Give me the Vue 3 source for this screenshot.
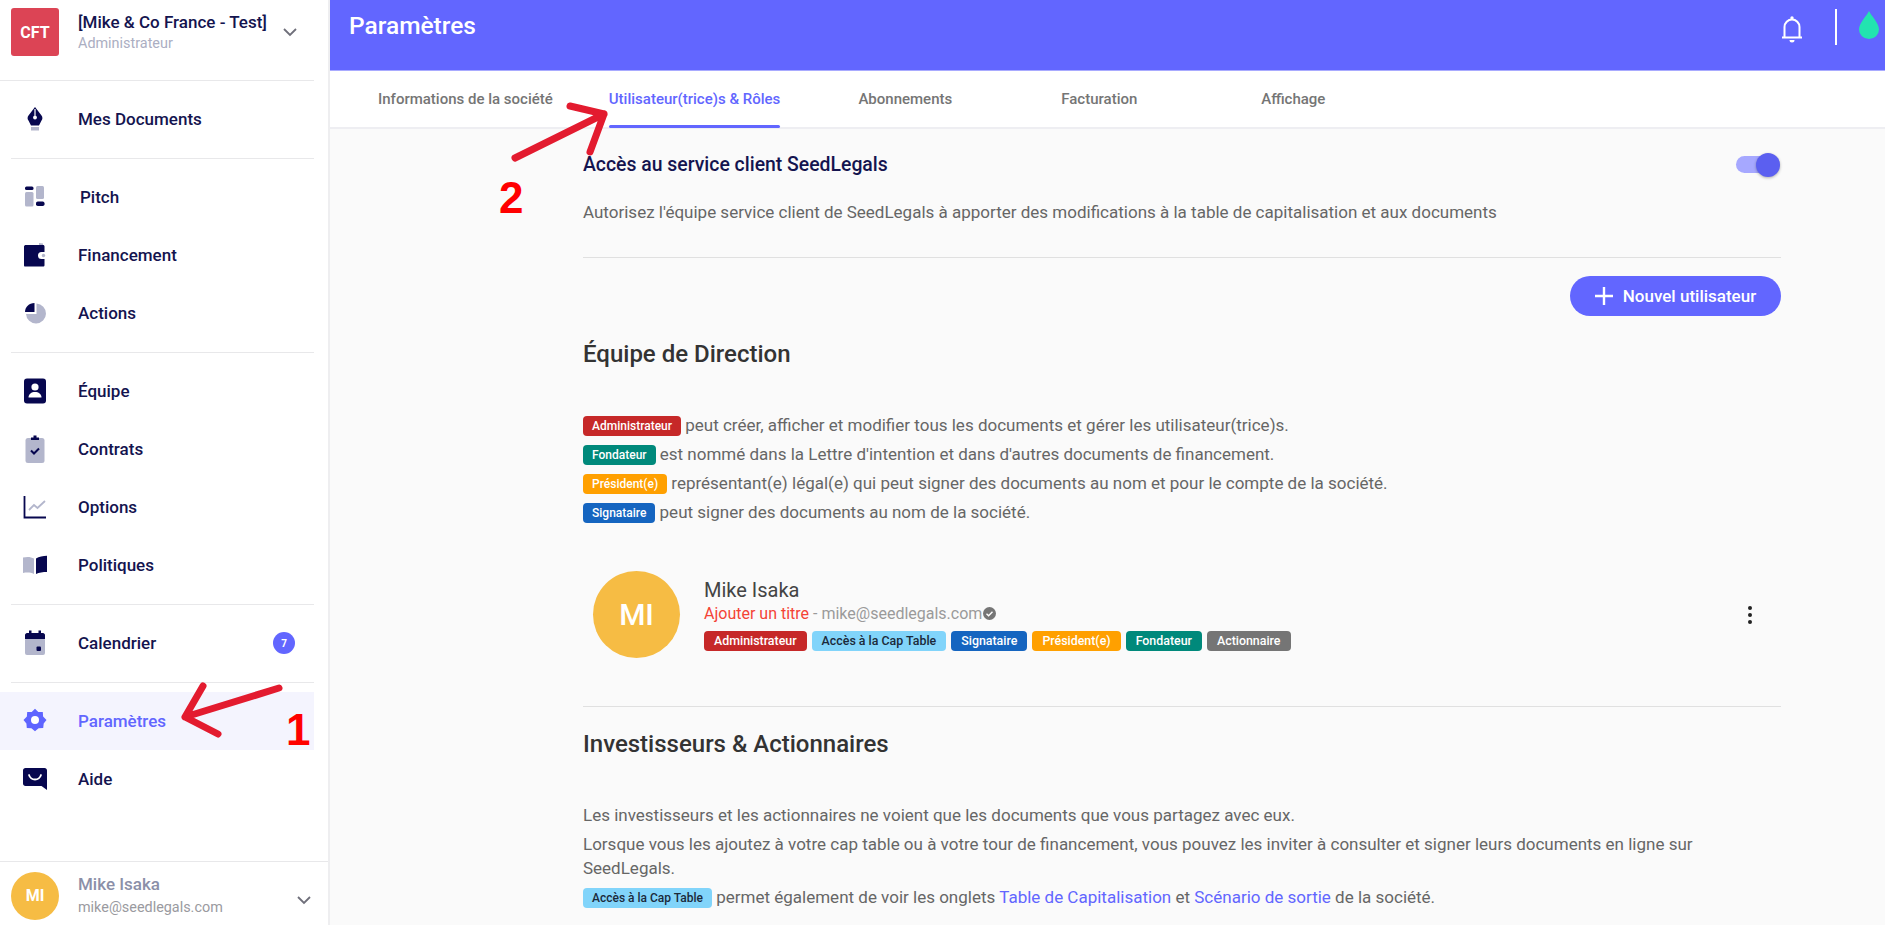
<script setup>
const tabs = ['Informations de la société', 'Utilisateur(trice)s & Rôles', 'Abonnements', 'Facturation', 'Affichage']
const userTags = [
  { label: 'Administrateur', cls: 'red' },
  { label: 'Accès à la Cap Table', cls: 'sky' },
  { label: 'Signataire', cls: 'blue' },
  { label: 'Président(e)', cls: 'orange' },
  { label: 'Fondateur', cls: 'teal' },
  { label: 'Actionnaire', cls: 'grey' }
]
</script>

<template>
  <div class="shell">
    <aside class="sidebar">
      <div class="company">
        <div class="logo">CFT</div>
        <div class="company_text">
          <div class="company_name">[Mike &amp; Co France - Test]</div>
          <div class="company_role">Administrateur</div>
        </div>
        <svg class="chev" width="16" height="10" viewBox="0 0 16 10"><path d="M2 2l6 6 6-6" fill="none" stroke="#6f6f7a" stroke-width="1.8"/></svg>
      </div>

      <div class="nav_group">
        <div class="nav_item">
          <span class="nav_icon">
            <svg width="18" height="24" viewBox="0 0 18 24"><path d="M9 0l6.500 8.500c1.300 1.800 1.200 3.500-.1 5.200L13 18.500H5l-2.400-4.800C1.300 12 1.200 10.300 2.500 8.500z" fill="#07074f"/><path d="M8.400 2h1.200v6.800H8.400z" fill="#fff"/><circle cx="9" cy="10.500" r="1.900" fill="#fff"/><rect x="5" y="20" width="8" height="3.500" fill="#b3b6cc"/></svg>
          </span>
          Mes Documents
        </div>
      </div>

      <div class="nav_group">
        <div class="nav_item pitch">
          <span class="nav_icon">
            <svg width="24" height="24" viewBox="0 0 24 24"><rect x="2" y="1.500" width="8.500" height="3.500" rx="1.500" fill="#07074f"/><rect x="2" y="7" width="8.500" height="14.500" rx="1.500" fill="#b3b6cc"/><rect x="13" y="1" width="8" height="13" rx="1.500" fill="#b3b6cc"/><rect x="13" y="16.500" width="8.500" height="4.500" rx="1.800" fill="#07074f"/></svg>
          </span>
          Pitch
        </div>
        <div class="nav_item">
          <span class="nav_icon">
            <svg width="26" height="26" viewBox="0 0 26 26"><path d="M17 1l4 .5V4h-4z" fill="#b3b6cc"/><path d="M2 4.500C2 3.500 3 3 4 3h17c1 0 1.500.6 1.500 1.500V10h-3a3.500 3.500 0 000 7h3v6c0 1-.5 1.500-1.500 1.500H3c-.6 0-1-.5-1-1.500z" fill="#07074f"/><circle cx="21.500" cy="13.500" r="1.700" fill="#b3b6cc"/></svg>
          </span>
          Financement
        </div>
        <div class="nav_item">
          <span class="nav_icon">
            <svg width="24" height="24" viewBox="0 0 24 24"><path d="M13.500 2.500A10 10 0 113 13h10.500z" fill="#b3b6cc"/><path d="M11.500 2v9H2C2 6 6 2 11.500 2z" fill="#07074f"/></svg>
          </span>
          Actions
        </div>
      </div>

      <div class="nav_group">
        <div class="nav_item">
          <span class="nav_icon">
            <svg width="24" height="26" viewBox="0 0 24 26"><rect x="1" y="0.500" width="22" height="25" rx="3" fill="#07074f"/><circle cx="12" cy="9" r="3.600" fill="#fff"/><path d="M5.500 19.500c0-3.500 3-5.500 6.500-5.500s6.500 2 6.500 5.500z" fill="#fff"/></svg>
          </span>
          Équipe
        </div>
        <div class="nav_item">
          <span class="nav_icon">
            <svg width="24" height="28" viewBox="0 0 24 28"><rect x="2.500" y="3" width="19" height="25" rx="2.500" fill="#b3b6cc"/><rect x="8" y="2.500" width="8" height="2.500" fill="#07074f"/><rect x="10.500" y="0.500" width="3" height="2.500" fill="#07074f"/><path d="M8 15.500l3 3 5-5" fill="none" stroke="#07074f" stroke-width="2"/></svg>
          </span>
          Contrats
        </div>
        <div class="nav_item">
          <span class="nav_icon">
            <svg width="24" height="24" viewBox="0 0 24 24"><path d="M1.500 1v21.500H23" fill="none" stroke="#07074f" stroke-width="1.800"/><path d="M6 15l5-5 3.500 3L22 6" fill="none" stroke="#b3b6cc" stroke-width="1.800"/></svg>
          </span>
          Options
        </div>
        <div class="nav_item">
          <span class="nav_icon">
            <svg width="26" height="20" viewBox="0 0 26 20"><path d="M1 2.500c4-1 8-.8 11 1V19c-3-1.500-7-1.700-11-1z" fill="#b3b6cc"/><path d="M14 3.500c3-1.800 7-2.800 11-2.800V17c-4 0-8 .6-11 2z" fill="#07074f"/></svg>
          </span>
          Politiques
        </div>
      </div>

      <div class="nav_group">
        <div class="nav_item">
          <span class="nav_icon">
            <svg width="22" height="26" viewBox="0 0 22 26"><rect x="1" y="8" width="20" height="17" rx="2" fill="#b3b6cc"/><path d="M1 9V5c0-1 1-2 2-2h16c1 0 2 1 2 2v4z" fill="#07074f"/><rect x="5" y="0.500" width="2.500" height="4" fill="#07074f"/><rect x="14.500" y="0.500" width="2.500" height="4" fill="#07074f"/><rect x="12.500" y="16.500" width="4.500" height="4.500" rx="1" fill="#07074f"/></svg>
          </span>
          Calendrier
          <span class="count">7</span>
        </div>
      </div>

      <div class="nav_group last">
        <div class="nav_item active">
          <span class="nav_icon">
            <svg width="24" height="26" viewBox="0 0 24 26"><path d="M12 .8l3.300 3.300 4.500-.2.300 4.600L23.500 12l-2.800 3.600-.5 4.500-4.600.1L12 23.200l-3.600-3-4.600-.1-.4-4.500L.5 12l3.400-3.500.3-4.600 4.500.2z" fill="#5e64ff"/><circle cx="12" cy="12" r="4" fill="#fff"/></svg>
          </span>
          Paramètres
        </div>
        <div class="nav_item">
          <span class="nav_icon">
            <svg width="26" height="24" viewBox="0 0 26 24"><path d="M3.500 1h19C24 1 25 2 25 3.500V23l-5.500-4h-16C2 19 1 18 1 16.500v-13C1 2 2 1 3.500 1z" fill="#07074f"/><path d="M7 8c1 3 3.500 4.500 6 4.500S18 11 19 8" fill="none" stroke="#fff" stroke-width="1.800" stroke-linecap="round"/></svg>
          </span>
          Aide
        </div>
      </div>

      <div class="account">
        <div class="account_avatar">MI</div>
        <div class="account_text">
          <div class="account_name">Mike Isaka</div>
          <div class="account_mail">mike@seedlegals.com</div>
        </div>
        <svg class="chev" width="16" height="10" viewBox="0 0 16 10"><path d="M2 2l6 6 6-6" fill="none" stroke="#6f6f7a" stroke-width="1.800"/></svg>
      </div>
    </aside>

    <main class="page">
      <header class="topbar">
        <h1>Paramètres</h1>
        <div class="topbar_right">
          <svg class="bell" width="24" height="28" viewBox="0 0 24 28"><path d="M2 22.500h20M4.500 22V12a7.500 7.500 0 0115 0v10" fill="none" stroke="#fff" stroke-width="2"/><circle cx="12" cy="3" r="1.700" fill="#fff"/><path d="M9.500 25h5a2.500 2.500 0 01-5 0z" fill="#fff"/></svg>
          <span class="bar"></span>
          <svg class="drop" width="20" height="28" viewBox="0 0 20 28"><path d="M10 0c2 4.500 10 12 10 18.500A10 9.500 0 010 18.500C0 12 8 4.500 10 0z" fill="#22e4b0"/></svg>
        </div>
      </header>

      <nav class="tabs">
        <div v-for="(tab, i) in tabs" :key="tab" class="tab" :class="{ current: i === 1 }">
          <span>{{ tab }}</span>
        </div>
      </nav>

      <section class="content">
        <div class="access_row">
          <h3>Accès au service client SeedLegals</h3>
          <div class="toggle"><span class="thumb"></span></div>
        </div>
        <p class="access_desc">Autorisez l'équipe service client de SeedLegals à apporter des modifications à la table de capitalisation et aux documents</p>
        <hr />

        <div class="btn_row">
          <button class="add_btn">
            <svg width="18" height="18" viewBox="0 0 18 18"><path d="M9 0v18M0 9h18" stroke="#fff" stroke-width="2.400"/></svg>
            Nouvel utilisateur
          </button>
        </div>

        <h2 class="team_title">Équipe de Direction</h2>
        <div class="legend">
          <p><span class="tag red">Administrateur</span> peut créer, afficher et modifier tous les documents et gérer les utilisateur(trice)s.</p>
          <p><span class="tag teal">Fondateur</span> est nommé dans la Lettre d'intention et dans d'autres documents de financement.</p>
          <p><span class="tag orange">Président(e)</span> représentant(e) légal(e) qui peut signer des documents au nom et pour le compte de la société.</p>
          <p><span class="tag blue">Signataire</span> peut signer des documents au nom de la société.</p>
        </div>

        <div class="user_row">
          <div class="user_avatar">MI</div>
          <div class="user_info">
            <div class="user_name">Mike Isaka</div>
            <div class="user_line">
              <span class="add_title">Ajouter un titre</span> - mike@seedlegals.com<svg class="verified" width="13" height="13" viewBox="0 0 13 13"><circle cx="6.500" cy="6.500" r="6.500" fill="#757575"/><path d="M3.500 6.700l2.100 2.100 3.900-4" fill="none" stroke="#fff" stroke-width="1.400"/></svg>
            </div>
            <div class="user_tags">
              <span v-for="tag in userTags" :key="tag.label" class="tag" :class="tag.cls">{{ tag.label }}</span>
            </div>
          </div>
          <svg class="more" width="6" height="20" viewBox="0 0 6 20"><circle cx="3" cy="3" r="2" fill="#222"/><circle cx="3" cy="10" r="2" fill="#222"/><circle cx="3" cy="17" r="2" fill="#222"/></svg>
        </div>
        <hr />

        <h2 class="investor_title">Investisseurs &amp; Actionnaires</h2>
        <div class="legend investors">
          <p>Les investisseurs et les actionnaires ne voient que les documents que vous partagez avec eux.</p>
          <p>Lorsque vous les ajoutez à votre cap table ou à votre tour de financement, vous pouvez les inviter à consulter et signer leurs documents en ligne sur SeedLegals.</p>
          <p><span class="tag sky">Accès à la Cap Table</span> permet également de voir les onglets <a>Table de Capitalisation</a> et <a>Scénario de sortie</a> de la société.</p>
        </div>
      </section>
    </main>

    <!-- annotations drawn over the screenshot -->
    <svg class="arrows" width="1885" height="925" viewBox="0 0 1885 925">
      <g fill="none" stroke="#e31b2f" stroke-width="7" stroke-linecap="round" stroke-linejoin="round">
        <path d="M279 688L185 717M203 686L185 717L218 734"/>
        <path d="M515 158L604 114M570 106L604 114L590 152"/>
      </g>
    </svg>
    <span class="mark one">1</span>
    <span class="mark two">2</span>
  </div>
</template>

<style scoped>
.shell {
  position: relative;
  display: flex;
  width: 100%;
  height: 925px;
  overflow: hidden;
  font-family: Roboto, "Liberation Sans", sans-serif;
}

.sidebar {
  display: flex;
  flex-direction: column;
  flex: none;
  width: 328px;
  border-right: 2px solid #eeeef0;
  background: #fff;
  color: #14144f;
}
.company {
  display: flex;
  flex: none;
  align-items: center;
  width: 314px;
  height: 81px;
  box-sizing: border-box;
  padding-left: 11px;
  border-bottom: 1px solid #e8e8ea;
}
.logo {
  display: flex;
  flex: none;
  width: 48px;
  height: 48px;
  margin-top: -16px;
  border-radius: 3px;
  background: #dc4455;
  color: #fff;
  font-size: 16px;
  font-weight: 700;
  align-items: center;
  justify-content: center;
}
.company_text {
  margin-left: 19px;
  margin-top: -16px;
}
.company_name {
  font-size: 17px;
  font-weight: 500;
  line-height: 22px;
}
.company_role {
  margin-top: 1px;
  color: #abaec2;
  font-size: 14.4px;
  line-height: 20px;
}
.chev {
  margin-left: auto;
  margin-right: 16px;
  margin-top: -16px;
  flex: none;
}

.nav_group {
  width: 314px;
  padding: 9px 0 11px;
  position: relative;
}
.nav_group::after {
  content: "";
  position: absolute;
  left: 11px;
  right: 0;
  bottom: 0;
  height: 1px;
  background: #e8e8ea;
}
.nav_group.last::after {
  display: none;
}
.nav_item {
  display: flex;
  align-items: center;
  height: 58px;
  font-size: 17px;
  font-weight: 500;
}
.nav_item.pitch {
  padding-left: 2px;
}
.nav_item.pitch .nav_icon {
  margin-left: -2px;
  width: 80px;
  padding-right: 10px;
}
.nav_item.active {
  background: #f4f4fe;
  color: #6266ff;
}
.nav_icon {
  display: flex;
  flex: none;
  width: 78px;
  padding-right: 8px;
  box-sizing: border-box;
  align-items: center;
  justify-content: center;
}
.count {
  display: flex;
  width: 22px;
  height: 22px;
  margin-left: auto;
  margin-right: 19px;
  border-radius: 50%;
  background: #6266ff;
  color: #fff;
  font-size: 10px;
  font-weight: 700;
  align-items: center;
  justify-content: center;
}

.account {
  display: flex;
  flex: none;
  align-items: center;
  margin-top: auto;
  height: 64px;
  box-sizing: border-box;
  padding: 4px 0 0 11px;
  border-top: 1px solid #e8e8ea;
}
.account .chev {
  margin-top: 8px;
  margin-right: 16px;
}
.account_avatar {
  display: flex;
  flex: none;
  width: 48px;
  height: 48px;
  border-radius: 50%;
  background: #f6bc44;
  color: #fff;
  font-size: 16px;
  font-weight: 700;
  align-items: center;
  justify-content: center;
}
.account_text {
  margin-left: 19px;
}
.account_name {
  color: #8b8fa8;
  font-size: 17px;
  font-weight: 500;
  line-height: 23px;
}
.account_mail {
  color: #9a9aa0;
  font-size: 14.4px;
  line-height: 23px;
}

.page {
  display: flex;
  flex-direction: column;
  flex: 1;
  min-width: 0;
  background: #fafafa;
}
.topbar {
  display: flex;
  flex: none;
  height: 70px;
  padding-left: 19px;
  border-bottom: 1px solid #a9abff;
  background: #6266ff;
  color: #fff;
  justify-content: space-between;
}
.topbar h1 {
  margin: 10px 0 0;
  font-size: 24.5px;
  font-weight: 500;
  line-height: 32px;
}
.topbar_right {
  display: flex;
  align-items: flex-start;
}
.bell {
  margin-top: 15px;
}
.bar {
  width: 2px;
  height: 36px;
  margin: 9px 22px 0 31px;
  background: #fff;
}
.drop {
  margin-top: 11px;
  margin-right: 6px;
}
.tabs {
  display: flex;
  flex: none;
  height: 56px;
  padding-left: 20px;
  border-bottom: 2px solid #eeeef2;
  background: #fff;
}
.tab {
  display: flex;
  position: relative;
  min-width: 194px;
  padding: 0 28px;
  box-sizing: border-box;
  color: #757575;
  font-size: 15px;
  font-weight: 500;
  align-items: center;
  justify-content: center;
}
.tab.current {
  color: #6266ff;
}
.tab.current::after {
  content: "";
  position: absolute;
  left: 28px;
  right: 28px;
  bottom: -1px;
  height: 3px;
  border-radius: 2px;
  background: #6266ff;
}

.content {
  width: 1198px;
  margin-left: 253px;
}
.access_row {
  display: flex;
  height: 34px;
  margin-top: 18px;
  align-items: center;
  justify-content: space-between;
}
.access_row h3 {
  margin: 0;
  color: #14144f;
  font-size: 19.4px;
  font-weight: 500;
}
.toggle {
  position: relative;
  width: 44px;
  height: 17px;
  margin-right: 1px;
  border-radius: 9px;
  background: #a6a8ff;
}
.thumb {
  position: absolute;
  top: -3px;
  right: 0;
  width: 24px;
  height: 24px;
  border-radius: 50%;
  background: #5b5ff0;
  box-shadow: 0 1px 3px rgba(0, 0, 0, .3);
}
.access_desc {
  margin: 19px 0 0;
  color: #666;
  font-size: 17px;
  line-height: 24px;
}
hr {
  height: 1px;
  margin: 0;
  border: 0;
  background: #e0e0e0;
}
.access_desc + hr {
  margin-top: 33px;
}
.btn_row {
  display: flex;
  margin-top: 18px;
  justify-content: flex-end;
}
.add_btn {
  display: flex;
  width: 211px;
  height: 40px;
  padding: 0;
  border: 0;
  border-radius: 20px;
  background: #6266ff;
  color: #fff;
  font-family: inherit;
  font-size: 17px;
  font-weight: 500;
  gap: 10px;
  align-items: center;
  justify-content: center;
}
h2 {
  margin: 0;
  color: #333;
  font-size: 24px;
  font-weight: 500;
  line-height: 32px;
}
.team_title {
  margin-top: 22px;
}
.legend {
  margin-top: 43px;
  color: #666;
  font-size: 17px;
  line-height: 24px;
}
.legend p {
  margin: 0 0 5px;
}
.legend a {
  color: #6266ff;
}
.tag {
  display: inline-block;
  height: 20px;
  padding: 0 9px;
  border-radius: 4px;
  font-size: 12px;
  font-weight: 500;
  line-height: 20px;
  vertical-align: 1px;
  color: #fff;
}
.red { background: #c62828; }
.teal { background: #00897b; }
.orange { background: #ffa000; }
.blue { background: #1565c0; }
.sky { background: #81d4fa; color: #1b2a3a; }
.grey { background: #757575; }

.user_row {
  display: flex;
  margin-top: 47px;
  padding: 0 0 48px 10px;
  align-items: center;
}
.user_avatar {
  display: flex;
  flex: none;
  width: 87px;
  height: 87px;
  border-radius: 50%;
  background: #f6bc44;
  color: #fff;
  font-size: 30px;
  font-weight: 500;
  align-items: center;
  justify-content: center;
}
.user_info {
  margin-left: 24px;
}
.user_name {
  color: #444;
  font-size: 20px;
  line-height: 24px;
}
.user_line {
  color: #9a9a9a;
  font-size: 16px;
  line-height: 24px;
}
.add_title {
  color: #f44336;
}
.verified {
  margin-left: 1px;
  vertical-align: -1px;
}
.user_tags {
  display: flex;
  margin-top: 5px;
  gap: 5px;
}
.user_tags .tag {
  padding: 0 10px;
  font-size: 12.4px;
}
.more {
  margin-left: auto;
  margin-right: 28px;
}
.investor_title {
  margin-top: 21px;
}
.investors {
  margin-top: 43px;
}

.arrows {
  position: absolute;
  top: 0;
  left: 0;
  pointer-events: none;
}
.mark {
  position: absolute;
  color: #f00;
  font-family: "Liberation Sans", sans-serif;
  font-weight: 700;
  line-height: 1;
}
.mark.one {
  left: 286px;
  top: 708px;
  font-size: 44px;
}
.mark.two {
  left: 499px;
  top: 176px;
  font-size: 44px;
}
</style>
